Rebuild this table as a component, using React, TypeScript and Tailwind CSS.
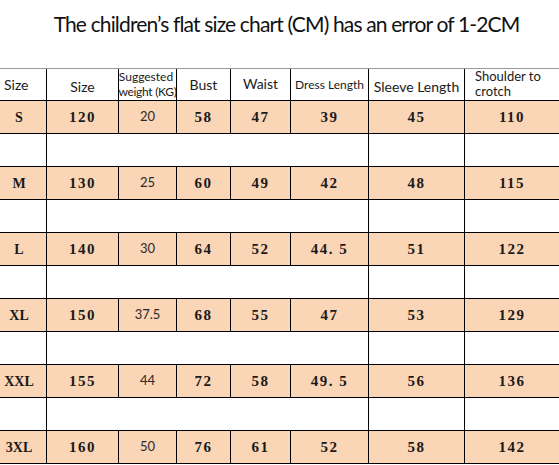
import React from 'react';

const cols = 'grid grid-cols-[47px_72px_58px_54px_60px_78px_96px_94px]';

const rows = [
  { size: 'S', h: '120', w: '20', bust: '58', waist: '47', dress: '39', sleeve: '45', crotch: '110' },
  { size: 'M', h: '130', w: '25', bust: '60', waist: '49', dress: '42', sleeve: '48', crotch: '115' },
  { size: 'L', h: '140', w: '30', bust: '64', waist: '52', dress: '44. 5', sleeve: '51', crotch: '122' },
  { size: 'XL', h: '150', w: '37.5', bust: '68', waist: '55', dress: '47', sleeve: '53', crotch: '129' },
  { size: 'XXL', h: '155', w: '44', bust: '72', waist: '58', dress: '49. 5', sleeve: '56', crotch: '136' },
  { size: '3XL', h: '160', w: '50', bust: '76', waist: '61', dress: '52', sleeve: '58', crotch: '142' },
];

const serif = "font-['Liberation_Serif',serif] font-bold text-[15px] tracking-[1.5px] text-[#1a1a1a]";
const sans = "font-['Lato',sans-serif]";

function DataRow({ r }: { r: (typeof rows)[number] }) {
  const cell = 'flex items-center justify-center border-r border-black';
  return (
    <div className={`${cols} h-[33px] bg-[#fad5b6] border-b border-black ${serif}`}>
      <div className={`${cell} pr-[8px] text-[14px] tracking-[0px]`}>{r.size}</div>
      <div className={cell}>{r.h}</div>
      <div className={`${cell} ${sans} font-normal tracking-normal text-[13px] text-[#2a2a2a]`}>{r.w}</div>
      <div className={cell}>{r.bust}</div>
      <div className={cell}>{r.waist}</div>
      <div className={`${cell} whitespace-pre`}>{r.dress}</div>
      <div className={cell}>{r.sleeve}</div>
      <div className="flex items-center justify-center">{r.crotch}</div>
    </div>
  );
}

function BlankRow() {
  return (
    <div className={`${cols} h-[33px] bg-white border-b border-black`}>
      <div className="border-r border-black" />
      <div className="col-span-5 border-r border-black" />
      <div className="border-r border-black" />
      <div />
    </div>
  );
}

export default function App() {
  return (
    <div className="w-[559px] h-[465px] bg-white overflow-hidden">
      {/* Title */}
      <div className={`h-[68px] flex justify-center pt-[8px] pl-[14px] ${sans} text-[21px] text-[#111] tracking-[-0.85px]`}>
        The children’s flat size chart (CM) has an error of 1-2CM
      </div>

      {/* Header */}
      <div className={`${cols} h-[33px] border-t border-t-[#9a9a9a] border-b border-black ${sans} text-[14px] text-[#1a1a1a] overflow-hidden`}>
        <div className="flex items-center pl-[4px] border-r border-black">Size</div>
        <div className="flex items-center justify-center border-r border-black pt-[3px]">Size</div>
        <div className="flex flex-col items-center border-r border-black text-[12px] leading-[15px] overflow-hidden">
          <span className="-ml-[3px]">Suggested</span>
          <span className="whitespace-nowrap tracking-[-0.3px]">weight (KG)</span>
        </div>
        <div className="flex items-center justify-center border-r border-black">Bust</div>
        <div className="flex items-center justify-center border-r border-black -mt-[2px]">Waist</div>
        <div className="flex items-center justify-center border-r border-black text-[12px]">Dress Length</div>
        <div className="flex items-center justify-center border-r border-black pt-[3px]">Sleeve Length</div>
        <div className="flex flex-col pl-[10px] text-[13px] leading-[15px] overflow-hidden">
          <span>Shoulder to</span>
          <span>crotch</span>
        </div>
      </div>

      {rows.map((r, i) => (
        <React.Fragment key={r.size}>
          <DataRow r={r} />
          {i < rows.length - 1 && <BlankRow />}
        </React.Fragment>
      ))}
    </div>
  );
}
